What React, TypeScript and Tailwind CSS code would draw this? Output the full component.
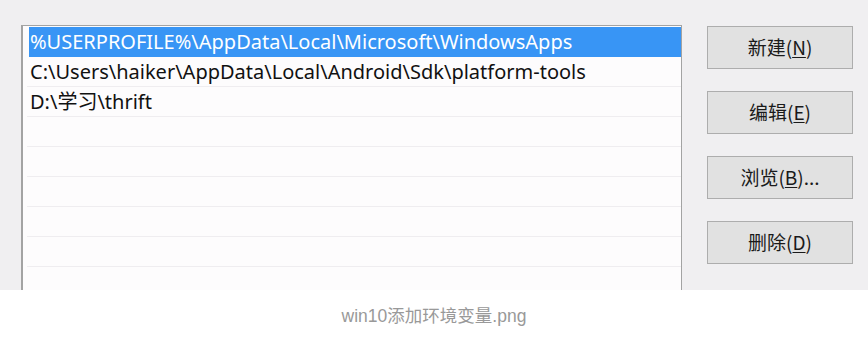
import React from 'react';

const paths = [
  '%USERPROFILE%\\AppData\\Local\\Microsoft\\WindowsApps',
  'C:\\Users\\haiker\\AppData\\Local\\Android\\Sdk\\platform-tools',
  'D:\\学习\\thrift',
];

const buttons: { label: string; key: string; tail?: string }[] = [
  { label: '新建', key: 'N' },
  { label: '编辑', key: 'E' },
  { label: '浏览', key: 'B', tail: '...' },
  { label: '删除', key: 'D' },
];

const sysFont = { fontFamily: '"Noto Sans", "Noto Sans CJK SC", sans-serif' };

export default function App() {
  const rows = [...paths, '', '', '', '', '', '', ''];

  return (
    <div className="w-[868px] h-[338px] bg-white overflow-hidden">
      {/* screenshot */}
      <div className="h-[290px] bg-[#f0eff1] flex overflow-hidden" style={sysFont}>
        <div className="ml-[21px] mt-[25px] w-[661px] shrink-0 border-l-2 border-t border-r border-[#a3a3a3] bg-[#fdfcfd] pl-[4px] pt-[1px]">
          {rows.map((p, i) => (
            <div
              key={i}
              className={
                'h-[30px] flex items-center text-[20px] leading-none whitespace-nowrap ' +
                (i === 0
                  ? 'bg-[#3895f5] text-white ml-[2px] pl-[1px]'
                  : 'text-[#111] pl-[3px] border-b border-[#efedf0]')
              }
            >
              {p}
            </div>
          ))}
        </div>

        <div className="ml-[25px] mt-[26px] flex flex-col gap-[22px]">
          {buttons.map((b) => (
            <div
              key={b.key}
              className="w-[146px] h-[43px] border border-[#adadad] bg-[#e1e1e1] flex items-center justify-center text-[19px] text-[#1a1a1a]"
              style={{ fontFamily: '"Noto Sans CJK SC", "Noto Sans", sans-serif' }}
            >
              {b.label}(<span className="underline underline-offset-2">{b.key}</span>){b.tail}
            </div>
          ))}
        </div>
      </div>

      {/* caption */}
      <div
        className="h-[48px] pt-[5px] flex items-center justify-center text-[17.5px] text-[#999]"
        style={{ fontFamily: '"Liberation Sans", "Noto Sans CJK SC", sans-serif' }}
      >
        win10添加环境变量.png
      </div>
    </div>
  );
}
